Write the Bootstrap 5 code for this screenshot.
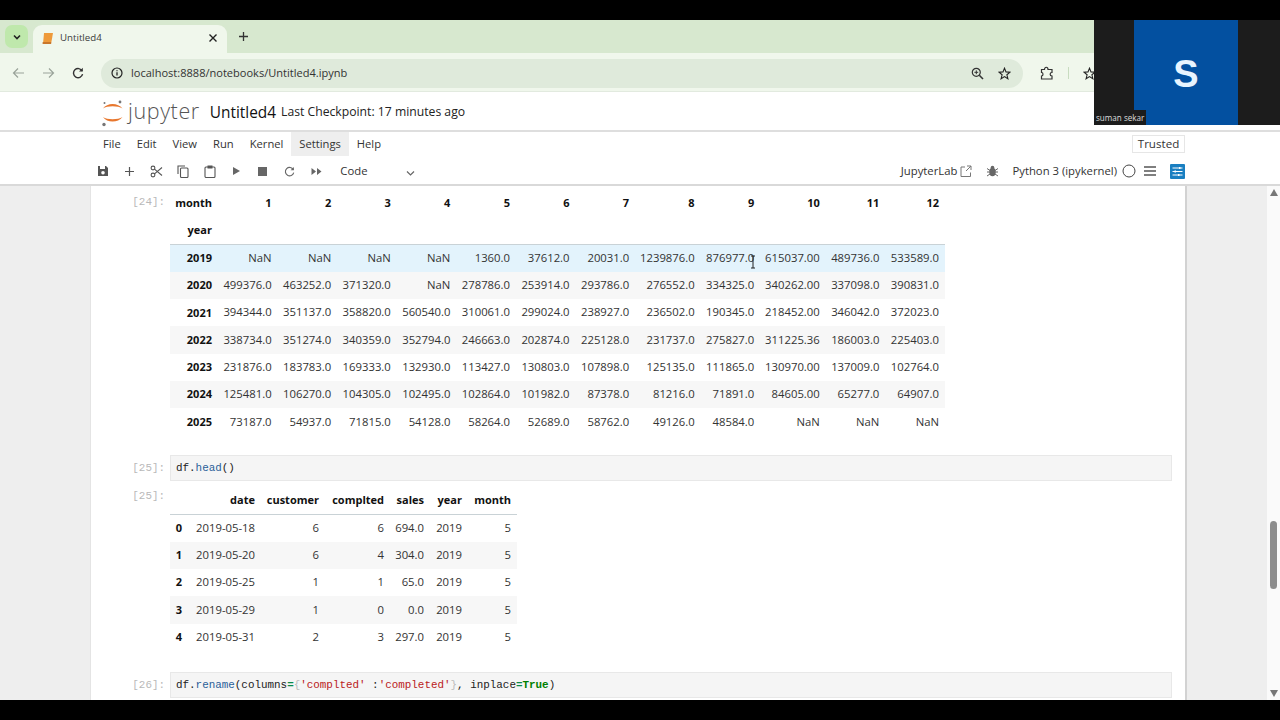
<!DOCTYPE html>
<html lang="en">
<head>
<meta charset="utf-8">
<title>Untitled4</title>
<link href="https://cdn.jsdelivr.net/npm/bootstrap@5.3.0/dist/css/bootstrap.min.css" rel="stylesheet">
<style>
html,body{height:720px;overflow:hidden;background:#000;font-family:"Open Sans","Noto Sans",sans-serif;color:#333}
.shell{height:720px;padding:20px 0;position:relative}
.browser{height:680px;background:#fff}
.tabstrip{height:33px;background:#d7e8cf;flex:none}
.tabpick{width:23px;height:23px;margin:5px 5px 0;background:#bfe8ac;border-radius:7px;color:#222}
.acttab{width:194px;height:28px;margin-top:5px;background:#f0f7ec;border-radius:9px 9px 0 0;font-size:9.7px;color:#3c3c3c;padding:0 9px 2px 8px}
.tabname{margin-left:6px}
.newtab{margin-left:11px;margin-top:5px;height:23px}
.urlbar{height:39px;background:#f0f7ec;flex:none;border-bottom:1px solid #e2eadf;padding:2px 0 0 3px}
.navic{width:30px}
.omni{margin-left:8px;width:922px;height:29px;background:#dfeadb;border-radius:15px;padding:0 10px;font-size:11.05px;color:#333}
.urltext{margin-left:8px}
.omzoom{position:absolute;left:870px}
.omstar{position:absolute;left:897px}
.extic{margin-left:17px}
.urlsep{width:1px;height:12px;background:#c8dcc0;margin-left:14px}
.star2{margin-left:14px}
.jphead{height:38px;flex:none;padding:3px 0 0 101px;background:#fff}
.jpword{font-size:21.5px;color:#555;letter-spacing:.6px;line-height:1;margin-left:3px;margin-top:-4px;font-weight:300}
.nbname{font-size:15.4px;color:#111;margin-left:10px}
.ckpt{font-size:12.2px;color:#222;margin-left:5px}
.menubar{height:27px;flex:none;border-top:2px solid #dedede;padding-left:95px;font-size:11.2px;color:#333;position:relative}
.menuit{padding:0 8px;height:24px;line-height:24px}
.menuon{background:#eee}
.trustbtn{position:absolute;left:1132px;top:3px;width:53px;height:18px;border:1px solid #e6e6e6;font-size:11.6px;line-height:16px;text-align:center;color:#333}
.toolbar{height:29px;flex:none;padding:1px 0 0 90px;font-size:11.3px;color:#333;border-bottom:2px solid #d9d9d9}
.toolic{width:26.6px;height:20px}
.celltype{margin-left:11px;width:75px}
.chev{margin-top:4px}
.tright{margin-left:auto;padding-right:95px}
.gap3{margin-left:3px}.gap15{margin-left:15px}.gap14{margin-left:14px}.gap5{margin-left:5px}.gap8{margin-left:8px}
.nbarea{flex:1;min-height:0;background:#eee;overflow:hidden;position:relative}
.nbpanel{width:1097px;margin-left:90px;height:100%;background:#fff;border-right:2px solid #d2d2d2;border-left:1px solid #e4e4e4;overflow:hidden;padding-top:4px}
.cellrow{padding-left:79px;position:relative;padding-right:13px}
.prompt{position:absolute;left:0;width:74px;text-align:right;font-family:"Liberation Mono",monospace;font-size:10.9px;color:#b9b9b9}
.pr-b{top:5px}.pr-c{top:1px}.pr-d{top:4px}
.incell{height:26px;background:#f5f5f5;border:1px solid #e8e8e8;font-family:"Liberation Mono",monospace;font-size:10.9px;line-height:24px;padding-left:5px;color:#222}
.dft{border-collapse:collapse;table-layout:fixed;font-size:11.3px;color:#333}
.dft th,.dft td{height:27.3px;text-align:right;padding:0 6px 0 0;white-space:nowrap;font-weight:400;vertical-align:middle}
.dft th{font-weight:700;color:#111;font-size:11px}
.pivot{width:775px}
.pivot tbody tr:first-child{background:#e3f3fc}
.pivot tbody tr:nth-child(even),.heads tbody tr:nth-child(even){background:#f7f7f7}
.rulehead{border-bottom:1px solid #c9d2d6}
.cw48{width:48px}.cw59{width:59.6px}.cw65{width:65.5px}
.heads{width:347px}
.h18{width:18px}.h73{width:73px}.h64{width:64px}.h65{width:65px}.h40{width:40px}.h38{width:38px}.h49{width:49px}
.gap-a{height:19.5px}.gap-b{height:6px}.gap-c{height:21px}
.pb{color:#2a6099}.pp{color:#a04fc0}.ps{color:#ba2121}.pk{color:#008000;font-weight:700}.pg{color:#0a8a4a;font-weight:700}.pd{color:#bbb}
.scrolltrack{position:absolute;right:0;top:0;bottom:0;width:13px;background:#fafafa}
.upar,.downar{position:absolute;left:3px;width:0;height:0;border-left:4px solid transparent;border-right:4px solid transparent}
.upar{top:3px;border-bottom:7px solid #777}
.downar{bottom:3px;border-top:7px solid #777}
.thumb{position:absolute;left:3px;top:335px;width:7px;height:68px;background:#8d8d8d;border-radius:4px}
.ibeam{position:absolute;left:750px;top:69px}
.vidbox{position:absolute;left:1094px;top:20px;width:186px;height:105px;background:#1c1c1c}
.vidblue{width:104px;height:105px;margin-left:40px;padding-top:3px;background:#0350a0;color:#e8f4ff;font-family:"Liberation Sans",sans-serif;font-weight:700;font-size:38px}
.vidname{position:absolute;left:0;bottom:0;width:52px;height:15px;background:#1c1c1c;color:#ddd;font-size:8.1px;line-height:15px;padding-left:2px;white-space:nowrap}
</style>
</head>
<body>
<div class="shell">
<div class="browser d-flex flex-column">

<div class="tabstrip d-flex">
  <div class="tabpick d-flex align-items-center justify-content-center">
    <svg width="10" height="10" viewBox="0 0 10 10"><path d="M2 3.500 5 6.500 8 3.500" fill="none" stroke="#222" stroke-width="1.600"/></svg>
  </div>
  <div class="acttab d-flex align-items-center">
    <svg width="13" height="13" viewBox="0 0 13 13"><path d="M3 1h9l-1.600 9H2.200z" fill="#ee9a3a"/><path d="M2.200 10h8.200l-.3 2H2.600a1 1 0 0 1-.4-2z" fill="#c9762a"/></svg>
    <span class="tabname">Untitled4</span>
    <svg class="ms-auto" width="10" height="10" viewBox="0 0 10 10"><path d="M1.500 1.500 8.500 8.500M8.500 1.500 1.500 8.500" stroke="#222" stroke-width="1.400"/></svg>
  </div>
  <div class="newtab d-flex align-items-center">
    <svg width="11" height="11" viewBox="0 0 11 11"><path d="M5.500 1v9M1 5.500h9" stroke="#333" stroke-width="1.300"/></svg>
  </div>
</div>

<div class="urlbar d-flex align-items-center">
  <div class="navic d-flex justify-content-center"><svg width="13" height="12" viewBox="0 0 13 12"><path d="M12 6H1.500M6 1.500 1.500 6 6 10.500" fill="none" stroke="#9aa39a" stroke-width="1.200"/></svg></div>
  <div class="navic d-flex justify-content-center"><svg width="13" height="12" viewBox="0 0 13 12"><path d="M1 6h10.500M7 1.500 11.500 6 7 10.500" fill="none" stroke="#9aa39a" stroke-width="1.200"/></svg></div>
  <div class="navic d-flex justify-content-center"><svg width="12" height="12" viewBox="0 0 12 12"><path d="M10.200 4A4.600 4.600 0 1 0 10.600 7.200" fill="none" stroke="#333" stroke-width="1.400"/><path d="M10.800 0.800v3.800H7z" fill="#333"/></svg></div>
  <div class="omni d-flex align-items-center position-relative">
    <svg width="12" height="12" viewBox="0 0 12 12"><circle cx="6" cy="6" r="5" fill="none" stroke="#222" stroke-width="1.200"/><path d="M6 5.200v3.400M6 3.200v1.100" stroke="#222" stroke-width="1.300"/></svg>
    <span class="urltext">localhost:8888/notebooks/Untitled4.ipynb</span>
    <svg class="omzoom" width="13" height="13" viewBox="0 0 13 13"><circle cx="5.300" cy="5.300" r="4" fill="none" stroke="#333" stroke-width="1.200"/><path d="M8.300 8.300 12 12" stroke="#333" stroke-width="1.600"/><path d="M5.300 3.400v3.800M3.400 5.300h3.800" stroke="#333" stroke-width="1"/></svg>
    <svg class="omstar" width="13" height="13" viewBox="0 0 13 13"><path d="M6.500 1.200 8 4.900l4 .3-3.100 2.600 1 3.900-3.400-2.100-3.400 2.100 1-3.900L1 5.200l4-.3z" fill="none" stroke="#222" stroke-width="1.100"/></svg>
  </div>
  <svg class="extic" width="14" height="14" viewBox="0 0 14 14"><path d="M1.500 3.500h3c0-3 3.500-3 3.500 0h4v3c-2.500 0-2.500 3.500 0 3.500v3H1.500v-3c2 0 2-3.500 0-3.500z" fill="none" stroke="#333" stroke-width="1.200"/></svg>
  <span class="urlsep"></span>
  <svg class="star2" width="13" height="13" viewBox="0 0 13 13"><path d="M6.500 1.200 8 4.900l4 .3-3.100 2.600 1 3.900-3.400-2.100-3.400 2.100 1-3.900L1 5.200l4-.3z" fill="none" stroke="#222" stroke-width="1.100"/></svg>
</div>

<div class="jphead d-flex align-items-center">
  <svg width="24" height="28" viewBox="0 0 24 28">
    <path d="M2 9.500C6 3.500 17 3.500 21.500 9.500 17 6.500 6 6.500 2 9.500z" fill="#e8772e"/>
    <path d="M2 18C6 24 17 24 21.500 18 17 21 6 21 2 18z" fill="#e8772e"/>
    <circle cx="19" cy="3" r="1.400" fill="#767677"/><circle cx="3" cy="25.500" r="1.700" fill="#767677"/><circle cx="3.500" cy="4" r="1" fill="#767677"/>
  </svg>
  <span class="jpword">jupyter</span>
  <span class="nbname">Untitled4</span>
  <span class="ckpt">Last Checkpoint: 17 minutes ago</span>
</div>

<div class="menubar d-flex">
  <span class="menuit">File</span><span class="menuit">Edit</span><span class="menuit">View</span><span class="menuit">Run</span><span class="menuit">Kernel</span><span class="menuit menuon">Settings</span><span class="menuit">Help</span>
  <span class="trustbtn">Trusted</span>
</div>

<div class="toolbar d-flex align-items-center">
  <span class="toolic d-flex align-items-center justify-content-center"><svg width="12" height="12" viewBox="0 0 12 12"><path d="M1 1h8l2 2v8H1z" fill="#555"/><rect x="3" y="1" width="5" height="3" fill="#fff"/><circle cx="6" cy="7.700" r="1.800" fill="#fff"/></svg></span>
  <span class="toolic d-flex align-items-center justify-content-center"><svg width="11" height="11" viewBox="0 0 11 11"><path d="M5.500 1v9M1 5.500h9" stroke="#555" stroke-width="1.200"/></svg></span>
  <span class="toolic d-flex align-items-center justify-content-center"><svg width="13" height="13" viewBox="0 0 13 13"><circle cx="3" cy="3" r="1.900" fill="none" stroke="#555" stroke-width="1.100"/><circle cx="3" cy="10" r="1.900" fill="none" stroke="#555" stroke-width="1.100"/><path d="M4.500 4.200 12 10.500M4.500 8.800 12 2.500" stroke="#555" stroke-width="1.100"/></svg></span>
  <span class="toolic d-flex align-items-center justify-content-center"><svg width="12" height="13" viewBox="0 0 12 13"><path d="M1 9V1h7" fill="none" stroke="#555" stroke-width="1.100"/><rect x="3.500" y="3" width="7.500" height="9.500" rx="1" fill="none" stroke="#555" stroke-width="1.100"/></svg></span>
  <span class="toolic d-flex align-items-center justify-content-center"><svg width="12" height="13" viewBox="0 0 12 13"><rect x="1" y="2" width="10" height="10.500" rx="1" fill="none" stroke="#555" stroke-width="1.100"/><rect x="3.500" y="0.500" width="5" height="3" fill="#555"/></svg></span>
  <span class="toolic d-flex align-items-center justify-content-center"><svg width="9" height="10" viewBox="0 0 9 10"><path d="M1 1v8l7-4z" fill="#666"/></svg></span>
  <span class="toolic d-flex align-items-center justify-content-center"><svg width="9" height="9" viewBox="0 0 9 9"><rect width="9" height="9" fill="#666"/></svg></span>
  <span class="toolic d-flex align-items-center justify-content-center"><svg width="11" height="11" viewBox="0 0 12 12"><path d="M10.200 4A4.600 4.600 0 1 0 10.600 7.200" fill="none" stroke="#666" stroke-width="1.200"/><path d="M10.800 1v3.600H7.200z" fill="#666"/></svg></span>
  <span class="toolic d-flex align-items-center justify-content-center"><svg width="11" height="9" viewBox="0 0 11 9"><path d="M0.500 1v7L5 4.500zM6 1v7l4.500-3.500z" fill="#666"/></svg></span>
  <span class="celltype d-flex align-items-center">Code<svg class="ms-auto chev" width="9" height="7" viewBox="0 0 9 7"><path d="M1 1.500 4.500 5 8 1.500" fill="none" stroke="#666" stroke-width="1.200"/></svg></span>
  <span class="tright d-flex align-items-center">
    <span>JupyterLab</span>
    <svg class="gap3" width="12" height="12" viewBox="0 0 12 12"><path d="M5 2H1v9.500h9.500V7.500M7 1h4v4M11 1 6 6" fill="none" stroke="#777" stroke-width="1"/></svg>
    <svg class="gap15" width="11" height="12" viewBox="0 0 11 12"><ellipse cx="5.500" cy="7" rx="3.200" ry="4.300" fill="#666"/><circle cx="5.500" cy="2.500" r="1.800" fill="#666"/><path d="M0 3.500 3 5.500M11 3.500 8 5.500M0 7h3M11 7H8M0 11l3-2M11 11 8 9" stroke="#666" stroke-width="1"/></svg>
    <span class="gap14">Python 3 (ipykernel)</span>
    <svg class="gap5" width="14" height="14" viewBox="0 0 14 14"><circle cx="7" cy="7" r="6" fill="none" stroke="#444" stroke-width="1"/></svg>
    <svg class="gap8" width="12" height="10" viewBox="0 0 12 10"><path d="M0 1h12M0 5h12M0 9h12" stroke="#555" stroke-width="1.600"/></svg>
    <svg class="gap14" width="15" height="15" viewBox="0 0 15 15"><rect width="15" height="15" rx="1" fill="#1a7fc1"/><path d="M2.500 4h10M2.500 7.500h10M2.500 11h10" stroke="#fff" stroke-width="1"/><rect x="9" y="3" width="1.500" height="2" fill="#fff"/><rect x="4.500" y="6.500" width="1.500" height="2" fill="#fff"/><rect x="8" y="10" width="1.500" height="2" fill="#fff"/></svg>
  </span>
</div>

<div class="nbarea">
  <div class="nbpanel">
    <div class="cellrow">
      <span class="prompt pr-d">[24]:</span>
      <table class="dft pivot">
        <colgroup><col class="cw48"><col class="cw59"><col class="cw59"><col class="cw59"><col class="cw59"><col class="cw59"><col class="cw59"><col class="cw59"><col class="cw65"><col class="cw59"><col class="cw65"><col class="cw59"><col class="cw59"></colgroup>
        <thead>
          <tr><th>month</th><th>1</th><th>2</th><th>3</th><th>4</th><th>5</th><th>6</th><th>7</th><th>8</th><th>9</th><th>10</th><th>11</th><th>12</th></tr>
          <tr class="rulehead"><th>year</th><th></th><th></th><th></th><th></th><th></th><th></th><th></th><th></th><th></th><th></th><th></th><th></th></tr>
        </thead>
        <tbody>
          <tr><th>2019</th><td>NaN</td><td>NaN</td><td>NaN</td><td>NaN</td><td>1360.0</td><td>37612.0</td><td>20031.0</td><td>1239876.0</td><td>876977.0</td><td>615037.00</td><td>489736.0</td><td>533589.0</td></tr>
          <tr><th>2020</th><td>499376.0</td><td>463252.0</td><td>371320.0</td><td>NaN</td><td>278786.0</td><td>253914.0</td><td>293786.0</td><td>276552.0</td><td>334325.0</td><td>340262.00</td><td>337098.0</td><td>390831.0</td></tr>
          <tr><th>2021</th><td>394344.0</td><td>351137.0</td><td>358820.0</td><td>560540.0</td><td>310061.0</td><td>299024.0</td><td>238927.0</td><td>236502.0</td><td>190345.0</td><td>218452.00</td><td>346042.0</td><td>372023.0</td></tr>
          <tr><th>2022</th><td>338734.0</td><td>351274.0</td><td>340359.0</td><td>352794.0</td><td>246663.0</td><td>202874.0</td><td>225128.0</td><td>231737.0</td><td>275827.0</td><td>311225.36</td><td>186003.0</td><td>225403.0</td></tr>
          <tr><th>2023</th><td>231876.0</td><td>183783.0</td><td>169333.0</td><td>132930.0</td><td>113427.0</td><td>130803.0</td><td>107898.0</td><td>125135.0</td><td>111865.0</td><td>130970.00</td><td>137009.0</td><td>102764.0</td></tr>
          <tr><th>2024</th><td>125481.0</td><td>106270.0</td><td>104305.0</td><td>102495.0</td><td>102864.0</td><td>101982.0</td><td>87378.0</td><td>81216.0</td><td>71891.0</td><td>84605.00</td><td>65277.0</td><td>64907.0</td></tr>
          <tr><th>2025</th><td>73187.0</td><td>54937.0</td><td>71815.0</td><td>54128.0</td><td>58264.0</td><td>52689.0</td><td>58762.0</td><td>49126.0</td><td>48584.0</td><td>NaN</td><td>NaN</td><td>NaN</td></tr>
        </tbody>
      </table>
    </div>
    <div class="gap-a"></div>
    <div class="cellrow">
      <span class="prompt pr-b">[25]:</span>
      <div class="incell">df.<span class="pb">head</span>()</div>
    </div>
    <div class="gap-b"></div>
    <div class="cellrow">
      <span class="prompt pr-c">[25]:</span>
      <table class="dft heads">
        <colgroup><col class="h18"><col class="h73"><col class="h64"><col class="h65"><col class="h40"><col class="h38"><col class="h49"></colgroup>
        <thead><tr class="rulehead"><th></th><th>date</th><th>customer</th><th>complted</th><th>sales</th><th>year</th><th>month</th></tr></thead>
        <tbody>
          <tr><th>0</th><td>2019-05-18</td><td>6</td><td>6</td><td>694.0</td><td>2019</td><td>5</td></tr>
          <tr><th>1</th><td>2019-05-20</td><td>6</td><td>4</td><td>304.0</td><td>2019</td><td>5</td></tr>
          <tr><th>2</th><td>2019-05-25</td><td>1</td><td>1</td><td>65.0</td><td>2019</td><td>5</td></tr>
          <tr><th>3</th><td>2019-05-29</td><td>1</td><td>0</td><td>0.0</td><td>2019</td><td>5</td></tr>
          <tr><th>4</th><td>2019-05-31</td><td>2</td><td>3</td><td>297.0</td><td>2019</td><td>5</td></tr>
        </tbody>
      </table>
    </div>
    <div class="gap-c"></div>
    <div class="cellrow">
      <span class="prompt pr-b">[26]:</span>
      <div class="incell">df.<span class="pb">rename</span>(columns<span class="pg">=</span><span class="pd">{</span><span class="ps">'complted'</span> :<span class="ps">'completed'</span><span class="pd">}</span>, inplace<span class="pg">=</span><span class="pk">True</span>)</div>
    </div>
  </div>
  <svg class="ibeam" width="6" height="14" viewBox="0 0 6 14"><path d="M1 1h4M3 1v12M1 13h4" fill="none" stroke="#222" stroke-width="1"/></svg>
  <div class="scrolltrack"><span class="upar"></span><span class="thumb"></span><span class="downar"></span></div>
</div>

</div>

<div class="vidbox">
  <div class="vidblue d-flex align-items-center justify-content-center">S</div>
  <div class="vidname">suman sekar</div>
</div>
</div>
<script src="https://cdn.jsdelivr.net/npm/bootstrap@5.3.0/dist/js/bootstrap.bundle.min.js"></script>
</body>
</html>
